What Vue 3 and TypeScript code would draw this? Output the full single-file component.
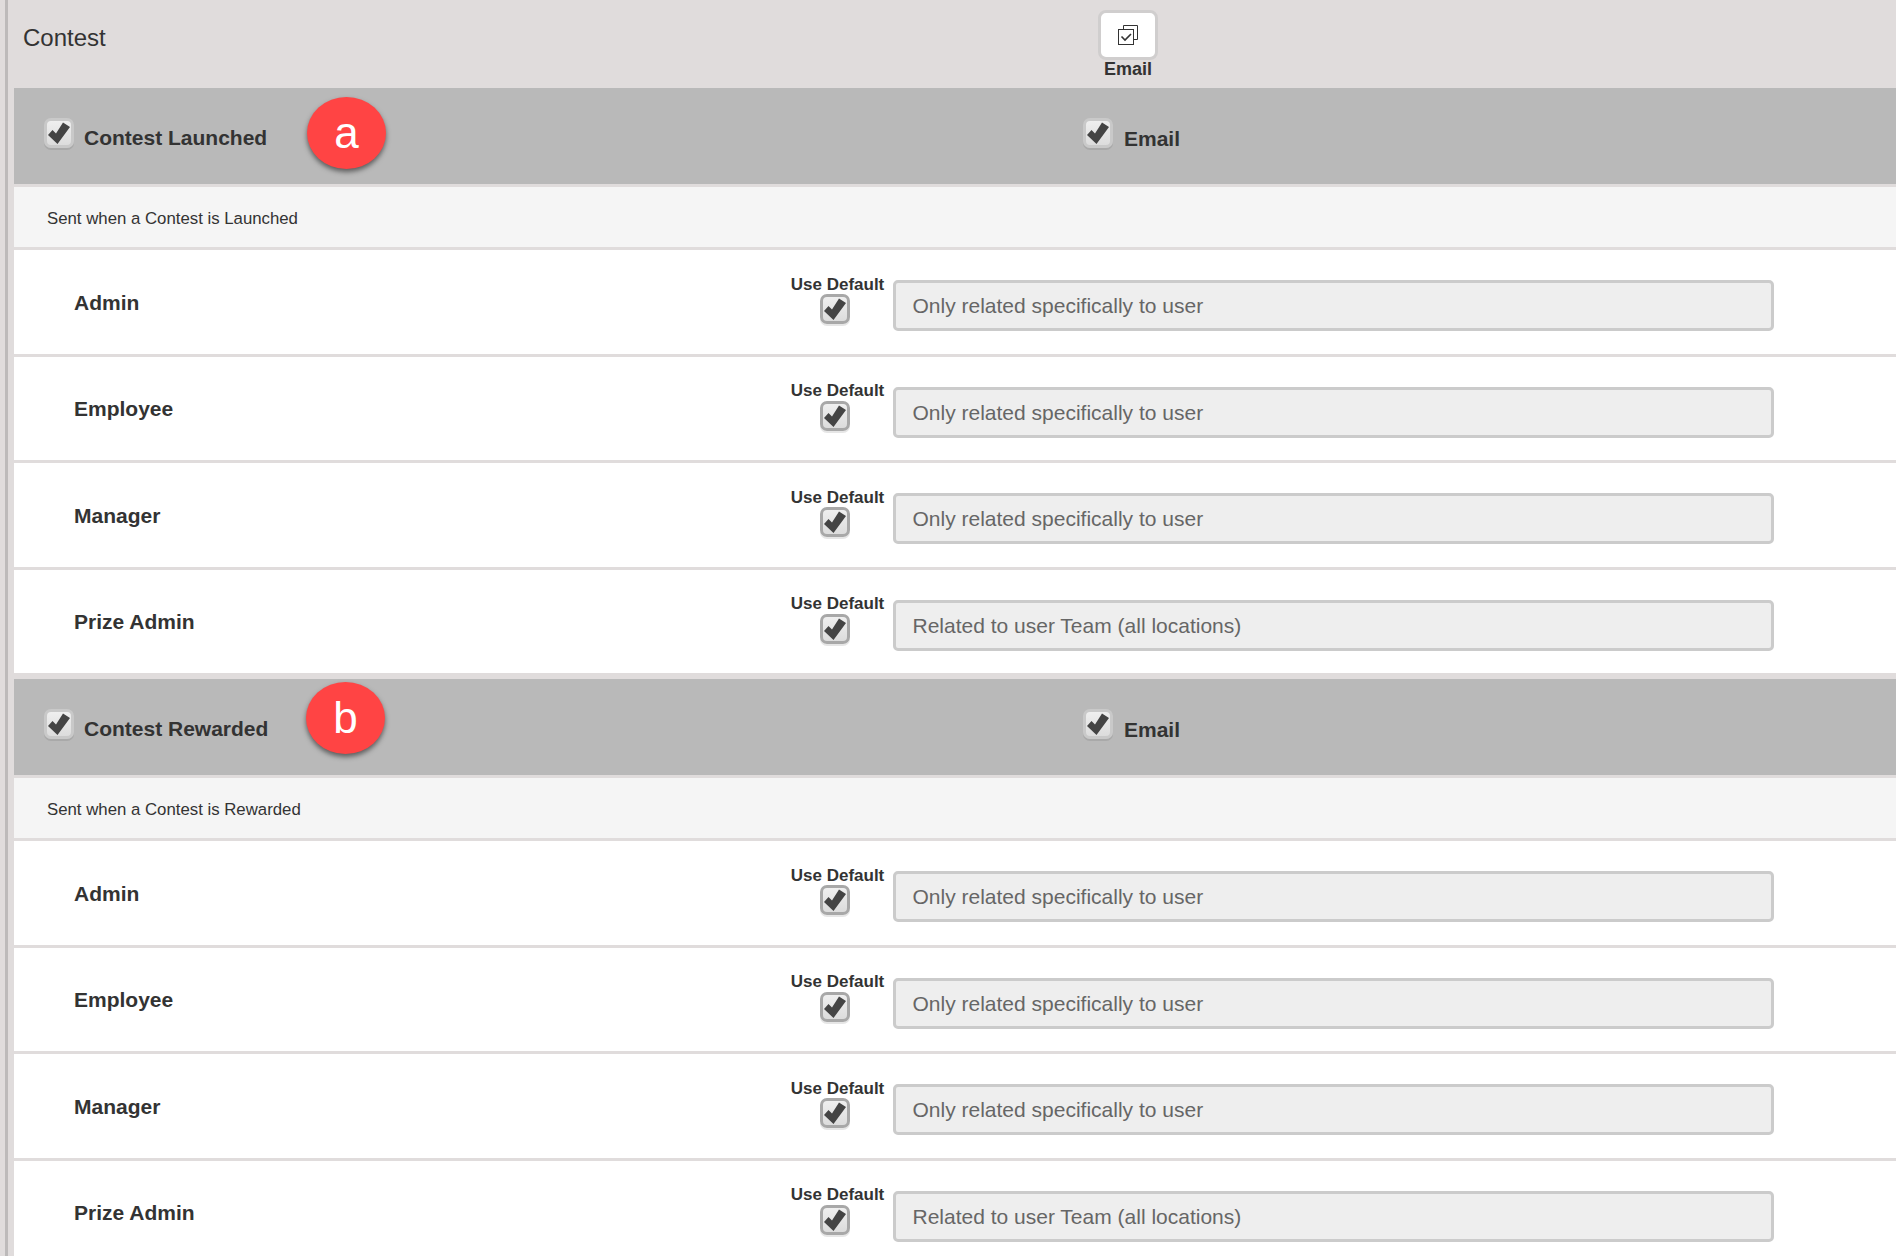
<script setup lang="ts">
interface Row { name: string; value: string }
interface Group { title: string; desc: string; badge: string }

const rows: Row[] = [
  { name: 'Admin', value: 'Only related specifically to user' },
  { name: 'Employee', value: 'Only related specifically to user' },
  { name: 'Manager', value: 'Only related specifically to user' },
  { name: 'Prize Admin', value: 'Related to user Team (all locations)' },
]
const groups: Group[] = [
  { title: 'Contest Launched', desc: 'Sent when a Contest is Launched', badge: 'a' },
  { title: 'Contest Rewarded', desc: 'Sent when a Contest is Rewarded', badge: 'b' },
]
const tick = 'M1 14L5.5 9L9 12.5L16 1.5L23 6L10.5 23Z'
</script>

<template>
  <div class="page">
    <div class="rail"></div>
    <main class="content">
      <header class="top">
        <div class="top-title">Contest</div>
        <div class="top-action">
          <div class="icon-btn">
            <svg width="20" height="20" viewBox="0 0 20 20" fill="none" stroke="#333" stroke-width="1">
              <path d="M5.5 4.5V0.5H19.5V14.5H15.5" />
              <rect x="0.5" y="4.5" width="15" height="15" fill="#fff" />
              <path d="M3.5 11.5L7 15L13 9" stroke-width="1.6" />
            </svg>
          </div>
          <div class="icon-label">Email</div>
        </div>
      </header>

      <section v-for="g in groups" :key="g.title" class="group">
        <div class="group-head">
          <div class="head-left">
            <span class="check check-head">
              <svg viewBox="0 0 24 24" width="24" height="24"><path :d="tick" fill="#444" /></svg>
            </span>
            <span class="head-title">{{ g.title }}</span>
            <span class="badge">{{ g.badge }}</span>
          </div>
          <div class="head-email">
            <span class="check check-head">
              <svg viewBox="0 0 24 24" width="24" height="24"><path :d="tick" fill="#444" /></svg>
            </span>
            <span class="head-title">Email</span>
          </div>
        </div>
        <div class="group-desc">{{ g.desc }}</div>
        <div v-for="r in rows" :key="r.name" class="row">
          <div class="row-name">{{ r.name }}</div>
          <div class="row-default">
            <div class="default-label">Use Default</div>
            <span class="check check-row">
              <svg viewBox="0 0 24 24" width="24" height="24"><path :d="tick" fill="#444" /></svg>
            </span>
          </div>
          <div class="select">{{ r.value }}</div>
        </div>
      </section>
    </main>
  </div>
</template>

<style>
html, body { margin: 0; background: #e0dcdc; overflow: hidden; }
</style>

<style scoped>
.page {
  display: flex;
  height: 1256px;
  overflow: hidden;
  background: #e0dcdc;
  font-family: "Liberation Sans", Arial, sans-serif;
  color: #333;
}
.rail {
  flex: none;
  width: 3px;
  margin: 0 6px 0 5px;
  background: #bdbaba;
}
.content { flex: 1; min-width: 0; }
.top {
  display: flex;
  height: 88px;
  margin-left: -9px;
  padding-left: 9px;
}
.top-title {
  width: 1066px;
  padding: 24px 0 0 9px;
  font-size: 24px;
  line-height: 28px;
}
.top-action { width: 78px; display: flex; flex-direction: column; align-items: center; padding-top: 10px; }
.icon-btn {
  box-sizing: border-box;
  width: 60px;
  height: 50px;
  background: #fff;
  border: 3px solid #d0cece;
  border-radius: 8px;
  display: flex;
  align-items: center;
  justify-content: center;
}
.icon-label { font-size: 18px; line-height: 18px; font-weight: 700; }
.group { margin-bottom: 6px; }
.group-head {
  display: flex;
  height: 96px;
  background: #b9b9b9;
  box-sizing: border-box;
}
.head-left {
  position: relative;
  display: flex;
  align-items: flex-start;
  width: 1069px;
  padding-left: 30px;
  box-sizing: border-box;
}
.head-email { display: flex; align-items: flex-start; }
.head-title {
  font-size: 21px;
  font-weight: 700;
  line-height: 26px;
  margin: 37px 0 0 10px;
  color: #333;
}
.head-email .head-title { margin: 38px 0 0 11px; }
.check {
  box-sizing: border-box;
  flex: none;
  display: flex;
  align-items: center;
  justify-content: center;
  width: 30px;
  height: 30px;
  border-radius: 7px;
  background: linear-gradient(#efefef, #dcdcdc);
}
.check-head {
  margin-top: 30px;
  border: 3px solid #c9c9c9;
  box-shadow: 0 2px 0 #a9a9a9;
}
.check-row {
  border: 3px solid #a8a8a8;
  box-shadow: 0 2px 0 #e6e6e6;
}
.badge {
  position: absolute;
  left: 293px;
  top: 9px;
  width: 79px;
  height: 72px;
  border-radius: 50%;
  background: #ff4444;
  color: #fff;
  font-size: 44px;
  line-height: 72px;
  text-align: center;
  box-shadow: 0 3px 5px rgba(0, 0, 0, 0.5);
}
.group:nth-of-type(2) .badge { left: 292px; top: 3px; }
.group-desc {
  margin-top: 3px;
  height: 60px;
  box-sizing: border-box;
  padding: 2px 0 0 33px;
  line-height: 60px;
  background: #f5f5f5;
  font-size: 16.8px;
}
.row {
  display: flex;
  align-items: flex-start;
  box-sizing: border-box;
  height: 103.5px;
  margin-top: 3px;
  background: #fff;
}
.row-name {
  width: 770px;
  padding: 39.5px 0 0 60px;
  box-sizing: border-box;
  font-size: 21px;
  font-weight: 700;
  line-height: 26px;
}
.row-default {
  width: 109px;
  padding-top: 24.5px;
  display: flex;
  flex-direction: column;
  align-items: center;
}
.default-label { font-size: 17px; font-weight: 700; line-height: 19px; white-space: nowrap; margin-left: -2px; }
.check-row { margin: 0.5px 0 0 -7px; }
.select {
  box-sizing: border-box;
  width: 881px;
  height: 51px;
  margin-top: 30px;
  padding-left: 16.5px;
  border: 3px solid #cbcbcb;
  border-radius: 5px;
  background: #eee;
  color: #666;
  font-size: 21px;
  line-height: 45px;
}
</style>
